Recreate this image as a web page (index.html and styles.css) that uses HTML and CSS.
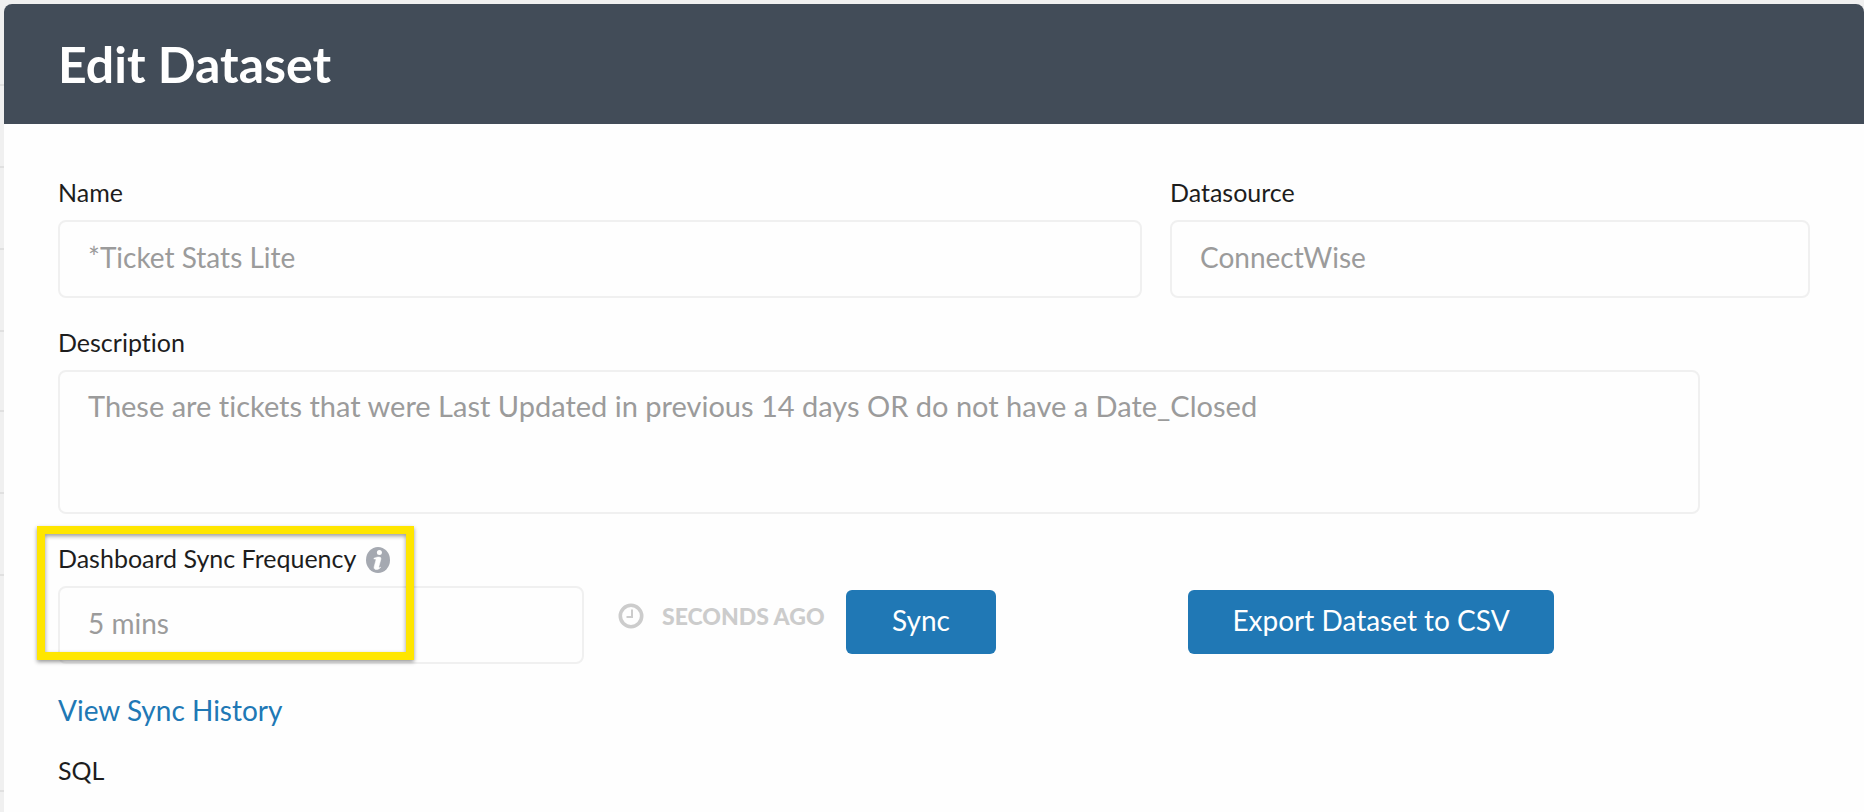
FILE: index.html
```html
<!DOCTYPE html>
<html lang="en">
<head>
<meta charset="utf-8">
<title>Edit Dataset</title>
<link rel="stylesheet" href="styles.css">
</head>
<body>
<div class="page">
  <div class="rows" aria-hidden="true">
    <i class="row"></i><i class="row"></i><i class="row"></i><i class="row"></i><i class="row row-short"></i><i class="row"></i><i class="row"></i><i class="row row-tall"></i>
  </div>
  <main class="panel">
    <header class="panel-header"><h1 class="title">Edit Dataset</h1></header>
    <form class="form">
      <div class="top">
        <div class="field">
          <label class="label" for="name">Name</label>
          <input class="input" id="name" type="text" value="*Ticket Stats Lite">
        </div>
        <div class="field">
          <label class="label" for="source">Datasource</label>
          <input class="input" id="source" type="text" value="ConnectWise">
        </div>
      </div>
      <div class="field description">
        <label class="label" for="description">Description</label>
        <textarea class="input textarea" id="description">These are tickets that were Last Updated in previous 14 days OR do not have a Date_Closed</textarea>
      </div>
      <div class="sync">
        <div class="field frequency">
          <div class="label-line">
            <label class="label" for="frequency">Dashboard Sync Frequency</label>
            <svg class="info" viewBox="0 0 24 26" aria-hidden="true">
              <ellipse cx="12" cy="13" rx="12" ry="13" fill="#a5a9b1"/>
              <circle cx="13.4" cy="5.6" r="2.5" fill="#fff"/>
              <path d="M8 11.2c2-.9 3.700-1.200 5-1.200 1.600 0 2.200.8 1.800 2.400l-1.900 7.200c-.3 1.300.3 1.400 1.900.6-1.500 1.800-3.300 2.500-4.900 2.300-1.700-.2-2.100-1.400-1.700-3l1.600-6c.4-1.600-.2-1.900-1.900-1.400z" fill="#fff" stroke="#fff" stroke-width=".5"/>
            </svg>
          </div>
          <input class="input" id="frequency" type="text" value="5 mins">
          <div class="highlight"></div>
        </div>
        <div class="last-sync">
          <svg class="clock" viewBox="0 0 26 26" fill="none" stroke="#ccc" aria-hidden="true">
            <circle cx="13" cy="13" r="10.700" stroke-width="3.600"/>
            <path d="M14 6.500V14H8.500" stroke-width="2"/>
          </svg>
          <span class="ago">SECONDS AGO</span>
        </div>
        <button class="button" type="button">Sync</button>
        <button class="button export" type="button">Export Dataset to CSV</button>
      </div>
      <a class="history" href="#history">View Sync History</a>
      <div class="label sql">SQL</div>
    </form>
  </main>
</div>
</body>
</html>
```
FILE: styles.css
```css
* { box-sizing: border-box; }
body { margin: 0; background: #f0f0f0; font-family: Lato, "Open Sans", sans-serif; font-variant-ligatures: none; color: #1d1d1d; }
.page { display: grid; grid-template-columns: 4px 1fr; min-height: 100vh; overflow: hidden; }
.rows { padding-top: 4px; }
.row { display: block; height: 82px; border-bottom: 2px solid #e0e0e0; }
.row-short { height: 80px; }
.row-tall { height: 216px; }
.panel { margin-top: 4px; background: #fefefe; border-radius: 8px 8px 0 0; overflow: hidden; }
.panel-header { height: 120px; padding: 0 54px; display: flex; align-items: center; background: #424c58; color: #fff; }
.title { margin: 0; font-size: 50px; line-height: 60px; font-weight: 700; }
.form { padding: 50px 54px 16px; }
.top { display: grid; grid-template-columns: 1084fr 640fr; gap: 28px; }
.field { display: flex; flex-direction: column; gap: 10px; }
.label { font-size: 25px; line-height: 36px; }
.input { width: 100%; height: 78px; margin: 0; padding: 0 28px 4px; border: 2px solid #f0f0f0; border-radius: 8px; background: #fefefe; color: #9b9b9b; font-family: inherit; font-size: 28px; line-height: 36px; font-variant-ligatures: none; outline: 0; }
.textarea { height: 144px; padding: 16px 28px; font-size: 29px; resize: none; }
.description { margin-top: 26px; width: calc(100% - 110px); }
.sync { display: flex; align-items: flex-start; margin-top: 26px; }
.frequency { position: relative; width: 526px; }
.label-line { display: flex; align-items: center; gap: 10px; }
.info { width: 24px; height: 26px; margin-top: 4px; }
.highlight { position: absolute; left: -21px; top: -14px; width: 377px; height: 134px; border: 8px solid #ffe600; box-shadow: 0 2px 4px rgba(0,0,0,.4), inset 0 2px 4px rgba(0,0,0,.4); pointer-events: none; }
.last-sync { display: flex; align-items: center; gap: 18px; width: 262px; padding: 58px 0 0 34px; }
.clock { width: 26px; height: 26px; flex: none; }
.ago { font-size: 23px; line-height: 36px; font-weight: 900; color: #ccc; white-space: nowrap; }
.button { width: 150px; height: 64px; margin: 50px 0 0; padding: 0 0 4px; border: 0; border-radius: 6px; background: #2078b5; color: #fff; font-family: inherit; font-size: 28px; line-height: 36px; }
.export { width: 366px; margin-left: 192px; }
.history { display: block; width: max-content; margin-top: 26px; font-size: 28px; line-height: 40px; color: #2078b5; text-decoration: none; }
.sql { margin-top: 22px; }
```
